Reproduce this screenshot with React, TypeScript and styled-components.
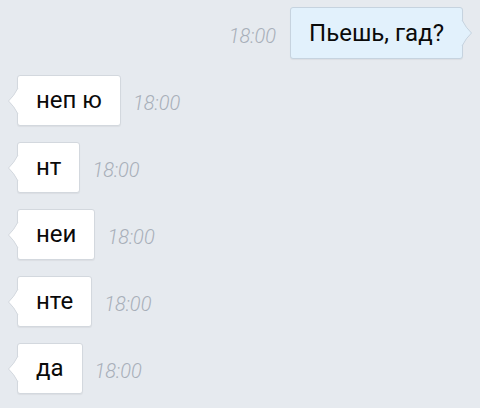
import React, { FC } from 'react'
import styled, { createGlobalStyle, css } from 'styled-components'

type Message = {
  id: number
  text: string
  time: string
  out?: boolean
}

const messages: Message[] = [
  { id: 1, text: 'Пьешь, гад?', time: '18:00', out: true },
  { id: 2, text: 'неп ю', time: '18:00' },
  { id: 3, text: 'нт', time: '18:00' },
  { id: 4, text: 'неи', time: '18:00' },
  { id: 5, text: 'нте', time: '18:00' },
  { id: 6, text: 'да', time: '18:00' },
]

const colors = {
  in: { fill: '#ffffff', border: '#d3d8de' },
  out: { fill: '#e2f1fc', border: '#c6d3df' },
}

const Tail: FC<{ out?: boolean }> = ({ out }) => {
  const c = out ? colors.out : colors.in
  return (
    <TailSvg $out={out} width="12" height="26" viewBox="0 0 12 26">
      <path d="M12 0 L11 0 Q7 8 1.5 13 Q7 18 11 26 L12 26 Z" fill={c.fill} />
      <path d="M11 0 Q7 8 1.5 13 Q7 18 11 26" fill="none" stroke={c.border} strokeWidth="1" />
    </TailSvg>
  )
}

export default function App() {
  return (
    <>
      <GlobalStyle />
      <Chat>
        {messages.map(m => (
          <Row key={m.id} $out={m.out}>
            {m.out && <Time>{m.time}</Time>}
            <Bubble $out={m.out}>
              <Tail out={m.out} />
              {m.text}
            </Bubble>
            {!m.out && <Time>{m.time}</Time>}
          </Row>
        ))}
      </Chat>
    </>
  )
}

const GlobalStyle = createGlobalStyle`
  html, body {
    margin: 0;
    padding: 0;
    background: #e6eaef;
  }
  body {
    font-family: Roboto, "Noto Sans", Arial, sans-serif;
  }
`
const Chat = styled.div`
  display: flex;
  flex-direction: column;
  gap: 16px;
  padding: 7px 17px;
  width: 480px;
  height: 408px;
  box-sizing: border-box;
  overflow: hidden;
`
const Row = styled.div<{ $out?: boolean }>`
  display: flex;
  align-items: center;
  justify-content: ${p => (p.$out ? 'flex-end' : 'flex-start')};
  gap: ${p => (p.$out ? '14px' : '12px')};
`
const Bubble = styled.div<{ $out?: boolean }>`
  position: relative;
  padding: 12px 18px;
  font-size: 24px;
  line-height: 25px;
  color: #0a0a0a;
  border-radius: 3px;
  ${p =>
    p.$out
      ? css`
          background: ${colors.out.fill};
          border: 1px solid ${colors.out.border};
          padding: 13px 18px 12px 18px;
        `
      : css`
          background: ${colors.in.fill};
          border: 1px solid ${colors.in.border};
        `}
  box-shadow: 0 1px 1px rgba(0, 0, 0, 0.05);
`
const TailSvg = styled.svg<{ $out?: boolean }>`
  position: absolute;
  top: 50%;
  margin-top: -13px;
  ${p =>
    p.$out
      ? css`
          right: -11px;
          transform: scaleX(-1);
        `
      : css`
          left: -11px;
        `}
`
const Time = styled.span`
  padding-top: 5px;
  font-size: 20px;
  font-style: italic;
  font-weight: 300;
  color: #a8afb9;
`
